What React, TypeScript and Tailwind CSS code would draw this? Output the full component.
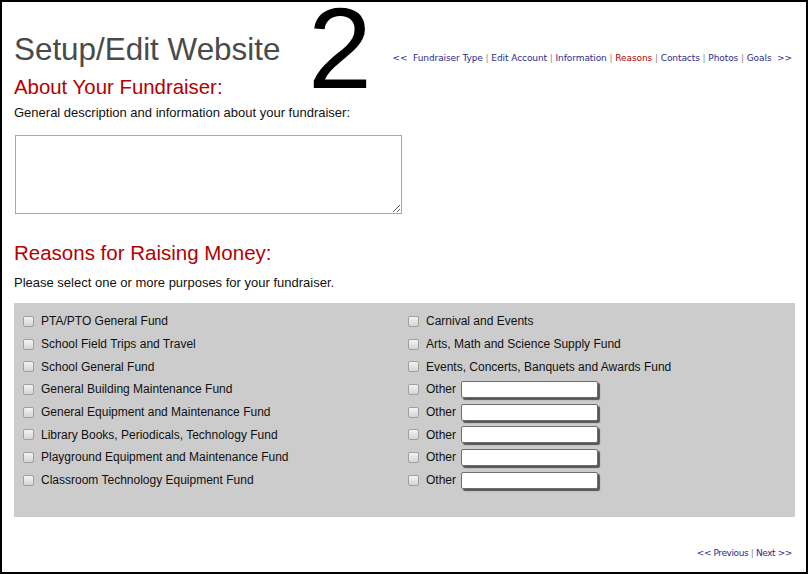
import React from 'react';

const leftReasons = [
  'PTA/PTO General Fund',
  'School Field Trips and Travel',
  'School General Fund',
  'General Building Maintenance Fund',
  'General Equipment and Maintenance Fund',
  'Library Books, Periodicals, Technology Fund',
  'Playground Equipment and Maintenance Fund',
  'Classroom Technology Equipment Fund',
];

const rightReasons = ['Carnival and Events', 'Arts, Math and Science Supply Fund', 'Events, Concerts, Banquets and Awards Fund'];

const steps = ['Fundraiser Type', 'Edit Account', 'Information', 'Reasons', 'Contacts', 'Photos', 'Goals'];

const Box: React.FC = () => (
  <span className="inline-block w-[11px] h-[11px] shrink-0 rounded-[2px] border border-[#a0a0a0] bg-gradient-to-b from-[#f4f4f4] to-[#d4d4d4]" />
);

const App: React.FC = () => {
  return (
    <div className="relative w-[808px] h-[574px] border-2 border-black bg-white font-['Liberation_Sans',Arial,sans-serif] text-[#111]">
      <div className="absolute left-[306px] top-[-2px] text-[115px] leading-[96px] text-black select-none">2</div>

      <div className="pl-[12px] pr-[12px] pt-[32px]">
        <div className="flex items-end justify-between">
          <h1 className="text-[31.4px] leading-[31px] text-[#4a4a4a]">Setup/Edit Website</h1>
          <div className="mb-[0px] mr-[2px] font-['DejaVu_Sans',Verdana,sans-serif] text-[9px] tracking-[-0.08px] text-[#2b2b8c] whitespace-nowrap">
            <span>&lt;&lt;&nbsp; </span>
            {steps.map((s, i) => (
              <span key={s}>
                <span className={s === 'Reasons' ? 'text-[#b40000]' : ''}>{s}</span>
                {i < steps.length - 1 && <span className="text-[#8a8a8a]"> | </span>}
              </span>
            ))}
            <span>&nbsp; &gt;&gt;</span>
          </div>
        </div>

        <h2 className="mt-[12px] text-[20.4px] leading-[20px] text-[#b30000]">About Your Fundraiser:</h2>
        <p className="mt-[8px] text-[13px] leading-[15px]">General description and information about your fundraiser:</p>
        <textarea className="mt-[15px] ml-[1px] block w-[387px] h-[79px] resize border border-[#a8a8a8] bg-white outline-none" />

        <h2 className="mt-[29px] text-[20.5px] leading-[20px] text-[#b30000]">Reasons for Raising Money:</h2>
        <p className="mt-[12px] text-[13px] leading-[15px]">Please select one or more purposes for your fundraiser.</p>

        <div className="mt-[13px] flex w-[781px] h-[214px] bg-[#cccccc] pl-[9px] pt-[7px] text-[12px]">
          <div className="w-[385px] flex flex-col">
            {leftReasons.map((r) => (
              <label key={r} className="flex items-center h-[22.7px] gap-[7px]">
                <Box />
                <span>{r}</span>
              </label>
            ))}
          </div>
          <div className="flex flex-col">
            {rightReasons.map((r) => (
              <label key={r} className="flex items-center h-[22.7px] gap-[7px]">
                <Box />
                <span>{r}</span>
              </label>
            ))}
            {[0, 1, 2, 3, 4].map((i) => (
              <label key={i} className="flex items-center h-[22.7px]">
                <Box />
                <span className="ml-[7px]">Other</span>
                <span className="ml-[5px] block w-[137px] h-[17px] rounded-[2px] border border-[#6e6e6e] bg-white shadow-[2px_2px_1px_#555]" />
              </label>
            ))}
          </div>
        </div>

        <div className="mt-[30px] mr-[2px] text-right font-['DejaVu_Sans',Verdana,sans-serif] text-[9px] tracking-[-0.4px] text-[#2b2b8c]">
          &lt;&lt; Previous <span className="text-[#8a8a8a]">|</span> Next &gt;&gt;
        </div>
      </div>
    </div>
  );
};

export default App;
